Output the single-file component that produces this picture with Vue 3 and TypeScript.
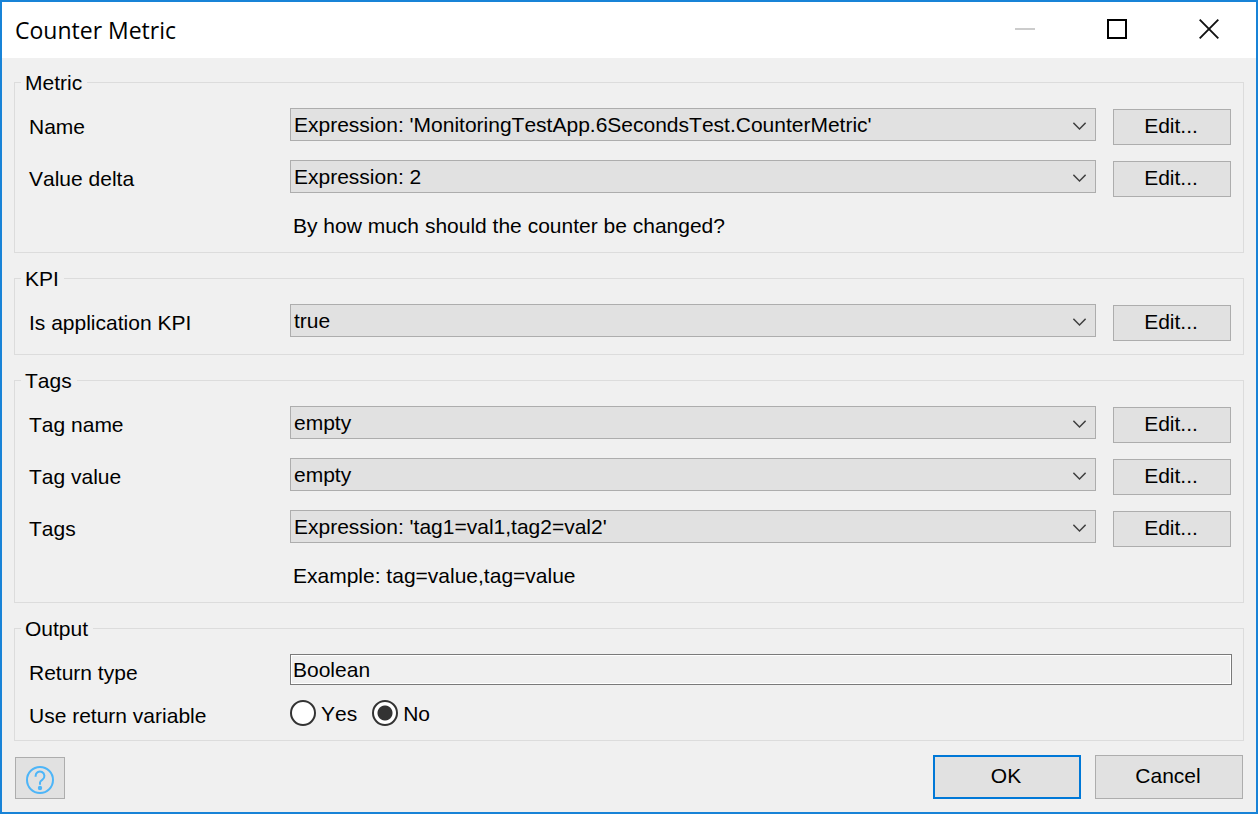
<script setup lang="ts">
import { ref } from 'vue'

interface Field {
  id: string
  label: string
  value: string
  options: string[]
}

interface Group {
  title: string
  fields: Field[]
  hint?: string
}

const groups = ref<Group[]>([
  {
    title: 'Metric',
    fields: [
      {
        id: 'name',
        label: 'Name',
        value: "Expression: 'MonitoringTestApp.6SecondsTest.CounterMetric'",
        options: ["Expression: 'MonitoringTestApp.6SecondsTest.CounterMetric'"],
      },
      { id: 'delta', label: 'Value delta', value: 'Expression: 2', options: ['Expression: 2'] },
    ],
    hint: 'By how much should the counter be changed?',
  },
  {
    title: 'KPI',
    fields: [{ id: 'kpi', label: 'Is application KPI', value: 'true', options: ['true', 'false'] }],
  },
  {
    title: 'Tags',
    fields: [
      { id: 'tag-name', label: 'Tag name', value: 'empty', options: ['empty'] },
      { id: 'tag-value', label: 'Tag value', value: 'empty', options: ['empty'] },
      {
        id: 'tags',
        label: 'Tags',
        value: "Expression: 'tag1=val1,tag2=val2'",
        options: ["Expression: 'tag1=val1,tag2=val2'", 'empty'],
      },
    ],
    hint: 'Example: tag=value,tag=value',
  },
])

const useReturn = ref<'yes' | 'no'>('no')
</script>

<template>
  <form class="window" @submit.prevent>
    <header class="titlebar">
      <h1 class="title">Counter Metric</h1>
      <div class="caption-buttons">
        <button type="button" class="caption" aria-label="Minimize" disabled>
          <svg width="20" height="20" viewBox="0 0 20 20"><path d="M0 10H20" stroke="#ccc" stroke-width="2" /></svg>
        </button>
        <button type="button" class="caption" aria-label="Maximize">
          <svg width="20" height="20" viewBox="0 0 20 20">
            <rect x="1" y="1" width="18" height="18" fill="none" stroke="#000" stroke-width="2" />
          </svg>
        </button>
        <button type="button" class="caption" aria-label="Close">
          <svg width="20" height="20" viewBox="0 0 20 20">
            <path d="M.7.7 19.3 19.3M19.3.7.7 19.3" stroke="#111" stroke-width="1.9" />
          </svg>
        </button>
      </div>
    </header>

    <main class="content">
      <fieldset v-for="group in groups" :key="group.title" class="group">
        <legend>{{ group.title }}</legend>
        <div class="rows">
          <div v-for="field in group.fields" :key="field.id" class="row">
            <label class="label" :for="field.id">{{ field.label }}</label>
            <div class="combo">
              <select :id="field.id" v-model="field.value">
                <option v-for="option in field.options" :key="option">{{ option }}</option>
              </select>
              <svg class="chevron" width="13" height="8" viewBox="0 0 13 8">
                <path d="M.4.8 6.5 7 12.6.8" fill="none" stroke="#404040" stroke-width="1.4" />
              </svg>
            </div>
            <button type="button" class="button edit" :aria-label="`Edit ${field.label}`">Edit...</button>
          </div>
          <p v-if="group.hint" class="hint">{{ group.hint }}</p>
        </div>
      </fieldset>

      <fieldset class="group output">
        <legend>Output</legend>
        <div class="rows">
          <div class="row">
            <label class="label" for="return-type">Return type</label>
            <input id="return-type" class="readonly" type="text" value="Boolean" readonly />
          </div>
          <div class="row" role="radiogroup" aria-labelledby="use-return">
            <span id="use-return" class="label">Use return variable</span>
            <div class="radios">
              <label class="radio"><input v-model="useReturn" type="radio" name="use-return" value="yes" />Yes</label>
              <label class="radio"><input v-model="useReturn" type="radio" name="use-return" value="no" />No</label>
            </div>
          </div>
        </div>
      </fieldset>
    </main>

    <footer class="footer">
      <button type="button" class="button help" aria-label="Help">
        <svg width="28" height="28" viewBox="0 0 28 28" fill="none" stroke="#4db5f8" stroke-width="2">
          <circle cx="14" cy="14" r="13" />
          <path d="M9.600 10.800V10A4.400 4.400 0 1 1 16.600 13.500C14.800 14.700 14 15.200 14 16.600V18.800" />
          <circle cx="14" cy="22" r="2.200" fill="#4db5f8" stroke="none" />
        </svg>
      </button>
      <div class="actions">
        <button type="submit" class="button action primary">OK</button>
        <button type="button" class="button action">Cancel</button>
      </div>
    </footer>
  </form>
</template>

<style>
body {
  margin: 0;
}
</style>

<style scoped>
.window,
.window * {
  box-sizing: border-box;
}

.window {
  display: flex;
  flex-direction: column;
  min-height: 100vh;
  border: 2px solid #1883d7;
  background: #f0f0f0;
  color: #000;
  font: 21px/25px "Liberation Sans", Arial, sans-serif;
  font-kerning: none;
}

button,
select,
input {
  margin: 0;
  font: inherit;
  font-kerning: none;
  color: inherit;
}

.titlebar {
  display: flex;
  align-items: center;
  justify-content: space-between;
  height: 56px;
  padding: 0 1px 0 13px;
  background: #fff;
}

.title {
  margin: 0;
  font: 400 23px/30px "Open Sans", "Noto Sans", sans-serif;
}

.caption-buttons {
  display: flex;
  height: 54px;
  align-self: flex-start;
}

.caption {
  display: flex;
  align-items: center;
  justify-content: center;
  width: 92px;
  padding: 0;
  border: 0;
  background: none;
}

.content {
  display: flex;
  flex-direction: column;
  gap: 13px;
  padding: 12px;
}

.group {
  min-width: 0;
  margin: 0;
  padding: 13px 12px 13px 6px;
  border: 1px solid #dcdcdc;
}

legend {
  padding: 0 5px 0 4px;
}

.rows {
  display: flex;
  flex-direction: column;
  gap: 15px;
  padding-left: 8px;
}

.row {
  display: flex;
  align-items: flex-start;
  min-height: 37px;
}

.label {
  flex: 0 0 261px;
  line-height: 37px;
}

.combo {
  position: relative;
  flex: 1;
  min-width: 0;
}

.combo select {
  display: block;
  width: 100%;
  height: 33px;
  padding: 0 32px 0 3px;
  border: 1px solid #adadad;
  border-radius: 0;
  background: #e1e1e1;
  appearance: none;
}

.chevron {
  position: absolute;
  top: 14px;
  right: 10px;
  pointer-events: none;
}

.button {
  display: flex;
  align-items: center;
  justify-content: center;
  padding: 0 2px 4px 0;
  border: 1px solid #adadad;
  background: #e1e1e1;
}

.edit {
  width: 118px;
  height: 36px;
  margin: 1px 0 0 17px;
}

.hint {
  margin: 0 0 0 264px;
  line-height: 27px;
}

.output {
  padding-right: 11px;
  padding-bottom: 6px;
}

.output .rows {
  gap: 6px;
}

.readonly {
  flex: 1;
  min-width: 0;
  height: 31px;
  padding: 0 2px;
  border: 1px solid #7a7a7a;
  border-radius: 0;
  background: #f0f0f0;
  box-shadow: inset 0 0 0 1px #fff;
}

.radios {
  display: flex;
  gap: 15px;
}

.radio {
  display: flex;
  align-items: center;
  gap: 5px;
  height: 32px;
}

.radio input {
  width: 26px;
  height: 26px;
  border: 2px solid #333;
  border-radius: 50%;
  background: #fff;
  appearance: none;
}

.radio input:checked {
  background: radial-gradient(circle, #333 7px, #fff 8px);
}

.footer {
  display: flex;
  align-items: flex-end;
  justify-content: space-between;
  padding: 2px 13px 13px;
}

.help {
  width: 50px;
  height: 42px;
  padding: 4px 0 0;
}

.actions {
  display: flex;
  gap: 14px;
}

.action {
  width: 148px;
  height: 44px;
}

.primary {
  border: 2px solid #0078d7;
}
</style>
